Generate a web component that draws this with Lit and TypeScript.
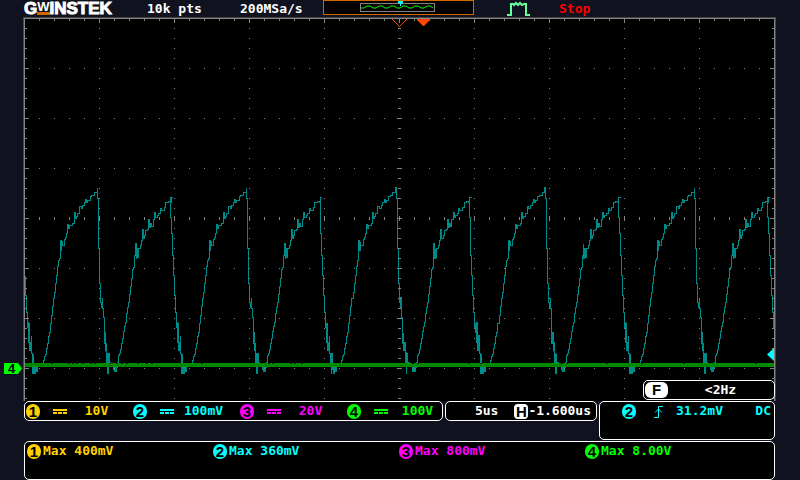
import { LitElement, html, svg, css } from "lit";
import { customElement, property } from "lit/decorators.js";

type Pt = [number, number];

// One tall pulse followed by one short pulse, in thirds of a pixel.
const PAIR: Pt[] = [
  [5, 110], [7, 160], [9, 225], [12, 285], [15, 345], [18, 395], [21, 440], [23, 425], [24, 455], [25, 485],
  [27, 425], [28, 510], [31, 485], [33, 465], [34, 518], [37, 550], [38, 578], [40, 520], [41, 568], [44, 578],
  [47, 560], [50, 572], [53, 555], [60, 555], [66, 548], [69, 540], [72, 528], [75, 522], [78, 505],
  [81, 490], [84, 468], [87, 455], [90, 430], [94, 405], [97, 378], [100, 355], [104, 335], [107, 310],
  [110, 285], [113, 258], [116, 240], [119, 235], [121, 180], [124, 210], [125, 182], [127, 196], [131, 195],
  [134, 178], [137, 172], [140, 160], [143, 132], [146, 145], [149, 136], [152, 136], [158, 130],
  [162, 96], [165, 114], [168, 108], [172, 98], [178, 78], [183, 85], [188, 76], [193, 67], [197, 58],
  [200, 67], [203, 60], [210, 48], [215, 46], [223, 36], [228, 37], [231, 22], [233, 55], [236, 205],
  [239, 310], [242, 365], [245, 382], [247, 352], [248, 384], [250, 410], [252, 490], [254, 455],
  [256, 510], [258, 485], [260, 548], [262, 515], [263, 578], [265, 520], [267, 545], [272, 550],
  [277, 555], [281, 560], [283, 572], [286, 560], [288, 572], [290, 560], [293, 545], [296, 525],
  [299, 520], [302, 506], [305, 490], [308, 474], [311, 452], [314, 437], [317, 425], [320, 400],
  [323, 382], [326, 365], [329, 342], [332, 318], [335, 293], [338, 268], [341, 262], [344, 225],
  [346, 190], [348, 235], [350, 203], [352, 230], [355, 205], [361, 194], [364, 180], [367, 148],
  [370, 175], [374, 165], [377, 150], [383, 148], [386, 118], [389, 140], [392, 130], [395, 138],
  [400, 118], [404, 95], [407, 112], [411, 106], [416, 98], [421, 83], [424, 91], [432, 80],
  [437, 66], [444, 64], [450, 66], [453, 52], [458, 52],
];
const PAIR_WIDTH = 149;

function signalPath(): string {
  let d = "";
  for (let k = 0; k < 6; k++) {
    for (const [px, py] of PAIR) {
      const x = Math.floor(20 + px / 3 + k * PAIR_WIDTH + k / 4);
      const y = Math.round(180 + py / 3);
      if (k === 0 && px < 15) continue;
      if (x > 773) return d;
      d += d ? `H${x + 0.5}V${y + 0.5}` : `M25.5 276V${y + 0.5}`;
    }
  }
  return d;
}

// The noisy floor of each pulse, just under the flat trace.
function troughs(): string {
  let d = "";
  for (let k = 0; k < 5; k++) {
    const x = Math.round(k * PAIR_WIDTH + k / 4);
    d += `M${x + 33} 366h4v4h-4zM${x + 113} 366h4v4h-4zM${x + 106} 355h2v9h-2z`;
  }
  return d;
}

function dots() {
  let d = "";
  const dash = (x: number, y: number, w: number, h: number) => {
    d += `M${x} ${y}h${w}v${h}h${-w}z`;
  };
  for (let col = 1; col < 50; col++) {
    const x = 24 + col * 15;
    const major = col % 5 === 0;
    dash(x, 19, 1, major ? 4 : 2);
    for (let y = 68; y < 400; y += 50) {
      if (y === 218) dash(x, major ? 216 : 217, 1, major ? 5 : 3);
      else dash(x, y, 1, 1);
    }
    if (major) for (let y = 28; y < 400; y += 10) dash(x, y, 1, 1);
  }
  for (let y = 28; y < 400; y += 10) {
    const major = (y - 18) % 50 === 0;
    dash(25, y, major ? 4 : 2, 1);
    dash(major ? 770 : 772, y, major ? 4 : 2, 1);
    dash(major ? 397 : 398, y, major ? 5 : 3, 1);
  }
  return d;
}

@customElement("channel-badge")
class ChannelBadge extends LitElement {
  @property() label = "";
  static styles = css`
    :host {
      display: flex;
      align-items: center;
      justify-content: center;
      flex: none;
      width: 14px;
      height: 15px;
      border-radius: 7px;
      background: currentColor;
    }
    .digit {
      color: #000;
      font: bold 15px/15px "Liberation Sans", sans-serif;
    }
  `;
  render() {
    return html`<span class="digit">${this.label}</span>`;
  }
}

@customElement("app-root")
class AppRoot extends LitElement {
  static styles = css`
    :host {
      display: block;
      min-height: 100vh;
      background: #10131f;
      color: #fff;
      font: bold 13px/16px "DejaVu Sans Mono", "Liberation Mono", monospace;
      white-space: nowrap;
      overflow: hidden;
    }
    .top {
      display: grid;
      grid-template-columns: 123fr 93fr 83fr 184fr 52fr 217fr;
      height: 17px;
      padding: 0 24px;
      align-items: center;
    }
    .top > * {
      min-width: 0;
    }
    .logo {
      display: flex;
      align-items: flex-start;
      height: 15px;
      font: bold 17px/15px "Liberation Sans", sans-serif;
      -webkit-text-stroke: 1px #fff;
    }
    .logo-w {
      height: 11px;
      font-size: 13px;
      line-height: 11px;
      border-bottom: 3px solid #d06800;
      -webkit-text-stroke: 0;
    }
    .memory,
    .pulse,
    .plot {
      display: block;
    }
    .memory {
      align-self: start;
    }
    .stop {
      color: #f00;
    }
    .screen {
      position: relative;
    }
    .plot {
      width: 100%;
      height: auto;
    }
    .marker-text {
      font: bold 13px "Liberation Sans", sans-serif;
    }
    .box {
      box-sizing: border-box;
      border: 1px solid #fff;
      border-radius: 5px;
      background: #000;
    }
    .freq {
      position: absolute;
      right: 25px;
      bottom: 1px;
      display: flex;
      align-items: center;
      width: 132px;
      height: 20px;
      padding: 0 1px;
    }
    .freq-key {
      width: 23px;
      border-radius: 6px;
      background: #fff;
      color: #000;
      font: bold 15px/16px "Liberation Sans", sans-serif;
      text-align: center;
    }
    .freq-value {
      flex: 1;
      text-align: center;
    }
    .status {
      display: grid;
      grid-template-columns: 419fr 152fr 176fr;
      gap: 2px;
      align-items: start;
      padding: 0 25px 0 24px;
    }
    .channels {
      display: flex;
      justify-content: space-between;
      height: 20px;
      padding: 0 1px;
    }
    .channel {
      display: flex;
      align-items: center;
      width: 94px;
    }
    .coupling {
      margin-left: 13px;
      flex: none;
    }
    .scale {
      flex: 1;
      padding-left: 6px;
      text-align: center;
    }
    .time {
      display: flex;
      align-items: center;
      justify-content: flex-end;
      height: 20px;
      padding-right: 5px;
    }
    .hkey {
      width: 14px;
      margin-left: 16px;
      border-radius: 4px;
      background: #fff;
      color: #000;
      font: bold 15px/15px "Liberation Sans", sans-serif;
      text-align: center;
    }
    .trigger {
      display: flex;
      align-items: flex-start;
      height: 39px;
      padding: 2px 3px 0 22px;
      color: #0ff;
      line-height: 14px;
    }
    .edge {
      margin: 1px 12px 0 18px;
    }
    .mode {
      margin-left: auto;
    }
    .measures {
      display: grid;
      grid-template-columns: repeat(4, 1fr);
      height: 39px;
      margin: 1px 25px 0 24px;
      padding: 2px 3px 0 2px;
    }
    .measure {
      display: flex;
      gap: 2px;
      height: 15px;
      line-height: 14px;
    }
    .c1 { color: #ffd000; }
    .c2 { color: #0ff; }
    .c3 { color: #f0f; }
    .c4 { color: #0f0; }
  `;

  private channels = ["10V", "100mV", "20V", "100V"];
  private maxima = ["400mV", "360mV", "800mV", "8.00V"];

  private renderPlot() {
    let gaps = "";
    for (const x of [51, 68, 72, 76, 82, 90, 94, 109, 116, 121, 126, 137, 146, 151, 201, 268, 272, 290, 294, 301, 412, 417, 468, 480, 561, 566, 606, 641, 683, 755])
      gaps += `M${x} 363h2v1h-2z`;
    return svg`
      <rect x="23" y="17" width="753" height="384" fill="#484848"/>
      <rect x="24" y="18" width="751" height="383" fill="#848484"/>
      <rect x="25" y="19" width="749" height="382" fill="#000"/>
      <path d=${signalPath()} fill="none" stroke="#008b8b" stroke-linecap="square" shape-rendering="crispEdges"/>
      <path d=${troughs()} fill="#008b8b" shape-rendering="crispEdges"/>
      <path d=${dots()} fill="#848484" shape-rendering="crispEdges"/>
      <rect x="25" y="363" width="749" height="4" fill="#008b00"/>
      <path d="M25 365.500H774" stroke="#087a00" stroke-dasharray="3 2 1 4 2 3"/>
      <path d=${gaps} fill="#001800"/>
      <path d="M392 19l7.500 7.500L407 19" fill="none" stroke="#ff4500"/>
      <path d="M417 19H430V20L424 26H423L417 20z" fill="#ff4500"/>
      <path d="M774 348L767 354.500L774 361z" fill="#0ff"/>
      <path d="M4 363H18L22 368.500L18 374H4z" fill="#0f0"/>
      <text x="8" y="373" fill="#000" class="marker-text">4</text>`;
  }

  private renderCoupling() {
    return html`<svg class="coupling" width="14" height="5" viewBox="0 0 14 5" fill="currentColor" shape-rendering="crispEdges" aria-hidden="true">
      <path d="M0 0h14v2H0zM0 3h4v2H0zM5 3h4v2H5zM10 3h4v2h-4z" />
    </svg>`;
  }

  render() {
    return html`
      <header class="top">
        <div class="logo">G<span class="logo-w">W</span>INSTEK</div>
        <span>10k pts</span>
        <span>200MSa/s</span>
        <svg class="memory" width="151" height="15" viewBox="0 0 151 15" fill="none">
          <rect x=".5" y=".5" width="150" height="14" fill="#000" stroke="#d06800" />
          <rect x="37.500" y="3.500" width="74" height="8" stroke="#848484" />
          <path d="M38 8h3l3-2h3l3 2h3l3-2h3l3 2h3l3-2h3l3 2h3l3-2h3l3 2h3l3-2h3l3 2h3l3-2h3l3 2" stroke="#0f0" />
          <path d="M75 1h5v2l-2 1v2h-1V4l-2-1z" fill="#0ff" />
        </svg>
        <svg class="pulse" width="23" height="15" viewBox="0 0 23 15" fill="none" aria-label="Pulse">
          <path d="M0 14H4V3H6L7 4L9 2L11 4L13 2L15 4L17 3H19V14H23" stroke="#66ffa0" stroke-width="2" />
        </svg>
        <span class="stop">Stop</span>
      </header>
      <main>
        <div class="screen">
          <svg class="plot" viewBox="0 17 800 384" role="img" aria-label="Waveforms">${this.renderPlot()}</svg>
          <div class="freq box"><span class="freq-key">F</span><span class="freq-value">&lt;2Hz</span></div>
        </div>
        <div class="status">
          <div class="channels box">
            ${this.channels.map(
              (v, i) => html`<div class="channel c${i + 1}"><channel-badge label=${i + 1}></channel-badge>${this.renderCoupling()}<span class="scale">${v}</span></div>`
            )}
          </div>
          <div class="time box"><span>5us</span><span class="hkey">H</span><span>-1.600us</span></div>
          <div class="trigger box">
            <channel-badge label="2"></channel-badge>
            <svg class="edge" width="10" height="14" viewBox="0 0 10 14" fill="none" stroke="#0ff" aria-label="Rising edge">
              <path d="M0 12.500H4.500V1.500H9M1 7.500L4.500 4L8 7.500" />
            </svg>
            <span>31.2mV</span><span class="mode">DC</span>
          </div>
        </div>
        <div class="measures box">
          ${this.maxima.map(
            (v, i) => html`<div class="measure c${i + 1}"><channel-badge label=${i + 1}></channel-badge><span>Max ${v}</span></div>`
          )}
        </div>
      </main>
    `;
  }
}
